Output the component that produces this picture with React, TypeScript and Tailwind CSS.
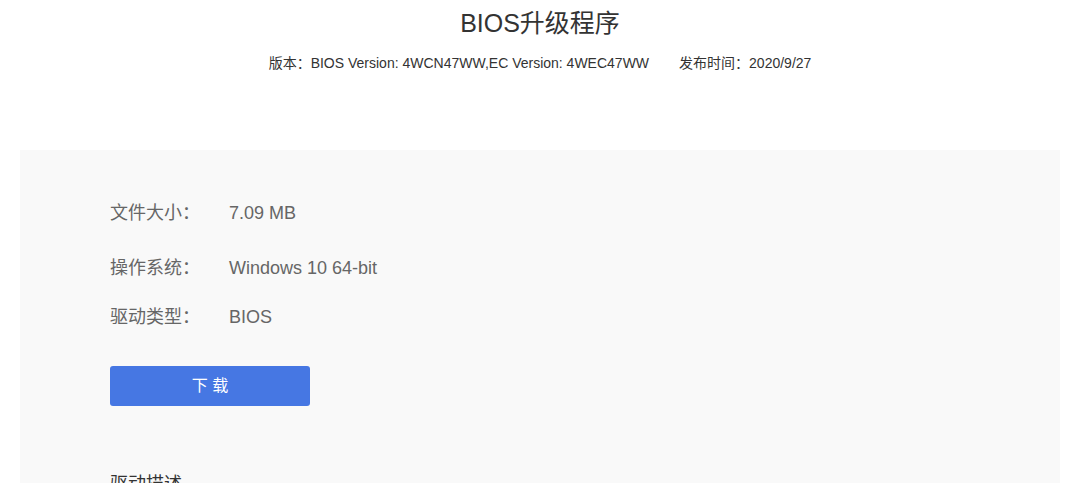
export default function App() {
  return (
    <div className="min-h-screen w-[1080px] bg-white font-['Liberation_Sans','Noto_Sans_CJK_SC',sans-serif] text-[#333]">
      <div className="pt-[7px] text-center">
        <h1 className="text-[25px] leading-[32px] text-[#333]">BIOS升级程序</h1>
        <div className="mt-[16px] flex justify-center gap-[30px] text-[14px] leading-[16px] text-[#333]">
          <span>版本：BIOS Version: 4WCN47WW,EC Version: 4WEC47WW</span>
          <span>发布时间：2020/9/27</span>
        </div>
      </div>
      <div className="mx-[20px] mt-[79px] h-[400px] bg-[#f9f9f9] pl-[90px] pt-[51px]">
        <div className="flex text-[18px] leading-[24px] text-[#666]">
          <span className="w-[119px]">文件大小：</span>
          <span>7.09 MB</span>
        </div>
        <div className="mt-[31px] flex text-[18px] leading-[24px] text-[#666]">
          <span className="w-[119px]">操作系统：</span>
          <span>Windows 10 64-bit</span>
        </div>
        <div className="mt-[25px] flex text-[18px] leading-[24px] text-[#666]">
          <span className="w-[119px]">驱动类型：</span>
          <span>BIOS</span>
        </div>
        <button className="mt-[37px] flex h-[40px] w-[200px] items-center justify-center rounded-[3px] bg-[#4677e3] text-[16px] text-white">
          下 载
        </button>
        <h2 className="mt-[66px] text-[18px] leading-[24px] text-[#333]">驱动描述</h2>
      </div>
    </div>
  )
}
